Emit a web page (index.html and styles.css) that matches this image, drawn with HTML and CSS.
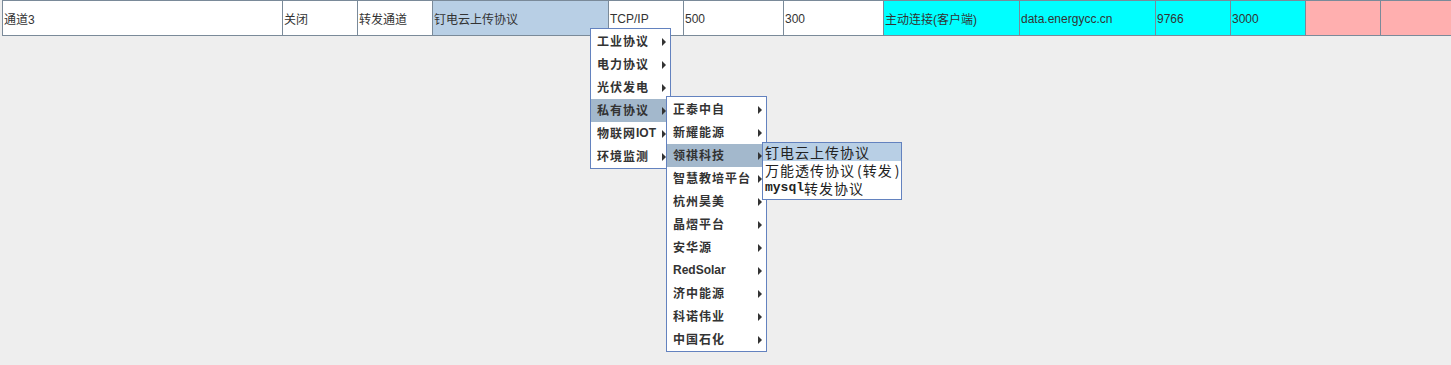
FILE: index.html
```html
<!DOCTYPE html>
<html lang="zh">
<head>
<meta charset="utf-8">
<title>通道</title>
<link rel="stylesheet" href="styles.css">
</head>
<body>
<div class="table">
  <div class="cell w280">通道3</div>
  <div class="cell w75">关闭</div>
  <div class="cell w75">转发通道</div>
  <div class="cell w176 sel">钉电云上传协议</div>
  <div class="cell w75">TCP/IP</div>
  <div class="cell w100">500</div>
  <div class="cell w100">300</div>
  <div class="cell w136 cyan">主动连接(客户端)</div>
  <div class="cell w136 cyan">data.energycc.cn</div>
  <div class="cell w75 cyan">9766</div>
  <div class="cell w75 cyan">3000</div>
  <div class="cell w75 pink"></div>
  <div class="cell w75 pink"></div>
</div>

<div class="menu menu1">
  <div class="item">工业协议<span class="arrow"></span></div>
  <div class="item">电力协议<span class="arrow"></span></div>
  <div class="item">光伏发电<span class="arrow"></span></div>
  <div class="item active">私有协议<span class="arrow"></span></div>
  <div class="item">物联网<span class="latin">IOT</span><span class="arrow"></span></div>
  <div class="item">环境监测<span class="arrow"></span></div>
</div>

<div class="menu menu2">
  <div class="item">正泰中自<span class="arrow"></span></div>
  <div class="item">新耀能源<span class="arrow"></span></div>
  <div class="item active">领祺科技<span class="arrow"></span></div>
  <div class="item">智慧教培平台<span class="arrow"></span></div>
  <div class="item">杭州昊美<span class="arrow"></span></div>
  <div class="item">晶熠平台<span class="arrow"></span></div>
  <div class="item">安华源<span class="arrow"></span></div>
  <div class="item"><span class="latin">RedSolar</span><span class="arrow"></span></div>
  <div class="item">济中能源<span class="arrow"></span></div>
  <div class="item">科诺伟业<span class="arrow"></span></div>
  <div class="item">中国石化<span class="arrow"></span></div>
</div>

<div class="menu menu3">
  <div class="leaf active">钉电云上传协议</div>
  <div class="leaf">万能透传协议<span class="paren">(</span>转发<span class="paren">)</span></div>
  <div class="leaf"><span class="mono">mysql</span>转发协议</div>
</div>
</body>
</html>
```

FILE: styles.css
```css
html, body {
  margin: 0;
  padding: 0;
}
body {
  background: #eeeeee;
  width: 1451px;
  height: 365px;
  overflow: hidden;
  position: relative;
  font-family: "Liberation Sans", "Noto Sans CJK SC", sans-serif;
  font-size: 12px;
  color: #333333;
}

.table {
  display: flex;
  margin-left: 2px;
  height: 36px;
  box-sizing: border-box;
  border-top: 1px solid #7a8a99;
  border-bottom: 1px solid #7a8a99;
  border-left: 1px solid #7a8a99;
  width: 1460px;
}
.cell {
  flex: none;
  box-sizing: border-box;
  border-right: 1px solid #7a8a99;
  background: #ffffff;
  display: flex;
  align-items: center;
  padding-left: 1px;
  padding-top: 1px;
  white-space: nowrap;
  overflow: hidden;
}
.w280 { width: 280px; }
.w75 { width: 75px; }
.w176 { width: 176px; }
.w100 { width: 100px; }
.w136 { width: 136px; }
.sel { background: #b8cfe5; }
.cyan { background: #00ffff; }
.pink { background: #ffafaf; }

.menu {
  position: absolute;
  box-sizing: border-box;
  background: #ffffff;
  border: 1px solid #6382bf;
  padding-top: 1px;
}
.menu1 { left: 590px; top: 28px; width: 81px; z-index: 1; }
.menu2 { left: 666px; top: 96px; width: 101px; z-index: 2; }
.menu3 { left: 762px; top: 142px; width: 140px; z-index: 3; padding-top: 0; padding-bottom: 2px; }

.item {
  display: flex;
  align-items: center;
  height: 23px;
  line-height: 14px;
  padding-left: 6px;
  padding-bottom: 1px;
  box-sizing: border-box;
  font-family: "Noto Sans CJK SC", sans-serif;
  font-weight: 700;
  font-size: 12px;
  letter-spacing: 1px;
  color: #333333;
  white-space: nowrap;
}
.item .latin {
  font-family: "Liberation Sans", sans-serif;
  font-weight: 700;
  letter-spacing: 0;
}
.item.active { background: #a3b8cc; }
.arrow {
  margin-left: auto;
  margin-right: 4px;
  margin-top: 1px;
  width: 0;
  height: 0;
  border-left: 4px solid #333333;
  border-top: 4px solid transparent;
  border-bottom: 4px solid transparent;
}

.leaf {
  height: 18px;
  line-height: 16px;
  display: flex;
  align-items: center;
  padding-left: 2px;
  font-family: "Noto Sans CJK SC", sans-serif;
  font-size: 14px;
  letter-spacing: 1px;
  color: #222222;
  white-space: nowrap;
}
.leaf.active { background: #b8cfe5; }
.paren {
  margin: 0 0 0 2px;
}
.mono {
  font-family: "Liberation Mono", monospace;
  font-weight: 700;
  font-size: 13px;
  letter-spacing: 0;
}
```
